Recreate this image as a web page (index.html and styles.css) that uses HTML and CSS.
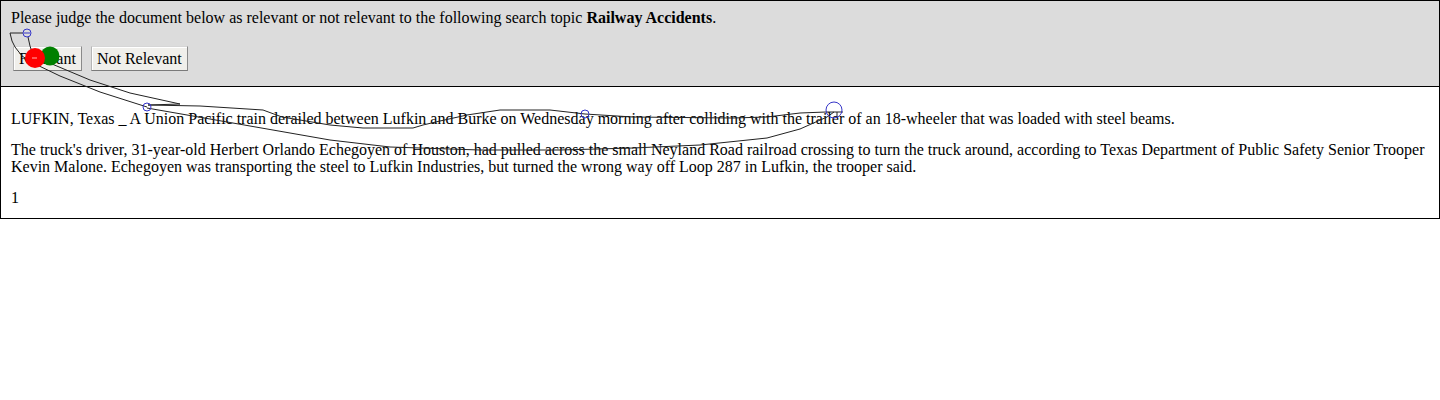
FILE: index.html
```html
<!DOCTYPE html>
<html>
<head>
<meta charset="utf-8">
<link rel="stylesheet" href="styles.css">
</head>
<body>
<div class="page">
  <div class="judge">
    <p class="prompt">Please judge the document below as relevant or not relevant to the following search topic <b>Railway Accidents</b>.</p>
    <div class="buttons">
      <button class="btn">Relevant</button>
      <button class="btn">Not Relevant</button>
    </div>
  </div>
  <div class="doc">
    <p>LUFKIN, Texas _ A Union Pacific train derailed between Lufkin and Burke on Wednesday morning after colliding with the trailer of an 18-wheeler that was loaded with steel beams.</p>
    <p>The truck's driver, 31-year-old Herbert Orlando Echegoyen of Houston, had pulled across the small Neyland Road railroad crossing to turn the truck around, according to Texas Department of Public Safety Senior Trooper Kevin Malone. Echegoyen was transporting the steel to Lufkin Industries, but turned the wrong way off Loop 287 in Lufkin, the trooper said.</p>
    <p class="last">1</p>
  </div>
  <svg class="trace" width="1440" height="400" viewBox="0 0 1440 400">
    <g fill="none" stroke="#222" stroke-width="1">
      <path d="M23 33 L10 33 L12 41 L15 47 L22 56 L33 63 L60 76 L100 92 L147 107"/>
      <path d="M28 37 L30 46 L33 55 L40 60 L52 64 L90 80 L130 93 L180 104 L148 105 L200 106 L263 110 L282 117 L330 125 L363 128 L413 128 L423 125 L440 121 L467 115 L500 110 L550 110 L585 114 L633 117 L733 118 L767 117 L800 113 L826 112 L843 112"/>
      <path d="M147 108 L250 126 L330 140 L390 147 L480 150 L560 150 L633 148 L700 145 L767 138 L800 129 L827 117 L834 112"/>
      <path d="M837 112 L837 118"/>
    </g>
    <circle cx="50" cy="56" r="9.5" fill="#008000"/>
    <circle cx="35" cy="58" r="10" fill="#ff0000"/>
    <path d="M32 58 L37 58" stroke="#ffb0b0" stroke-width="1"/>
    <g fill="none" stroke="#3535c8" stroke-width="1">
      <circle cx="27" cy="33" r="4"/>
      <path d="M24 33 L30 33"/>
      <circle cx="147" cy="107" r="4"/>
      <circle cx="585" cy="114" r="4"/>
      <circle cx="834" cy="110" r="8"/>
    </g>
  </svg>
</div>
</body>
</html>
```
FILE: styles.css
```css
html, body {
  margin: 0;
  padding: 0;
  background: #ffffff;
}
body {
  font-family: "Liberation Serif", "Times New Roman", serif;
  font-size: 16px;
  color: #000;
}
.page {
  position: relative;
  width: 1440px;
}
.judge {
  background: #dcdcdc;
  border: 1px solid #000;
  border-bottom: none;
  padding: 8px 10px 15px 10px;
}
.prompt {
  margin: 0;
  line-height: 18px;
}
.buttons {
  display: flex;
  gap: 9px;
  margin-top: 19px;
  margin-left: 2px;
}
.btn {
  font-family: "Liberation Serif", "Times New Roman", serif;
  font-size: 16px;
  color: #000;
  height: 25px;
  padding: 0 5px;
  line-height: 20px;
  background: #f0efeb;
  border: 1px solid;
  border-color: #d6d6d6 #8a8a8a #7a7a7a #b5b5b5;
  box-shadow: inset 1px 1px 0 #ffffff;
  border-radius: 0;
}
.doc {
  border: 1px solid #000;
  padding: 9px 10px 12px 10px;
}
.doc p {
  margin: 14px 0;
  line-height: 17px;
}
.doc p.last {
  margin-bottom: 0;
}
.trace {
  position: absolute;
  left: 0;
  top: 0;
  pointer-events: none;
}
```
